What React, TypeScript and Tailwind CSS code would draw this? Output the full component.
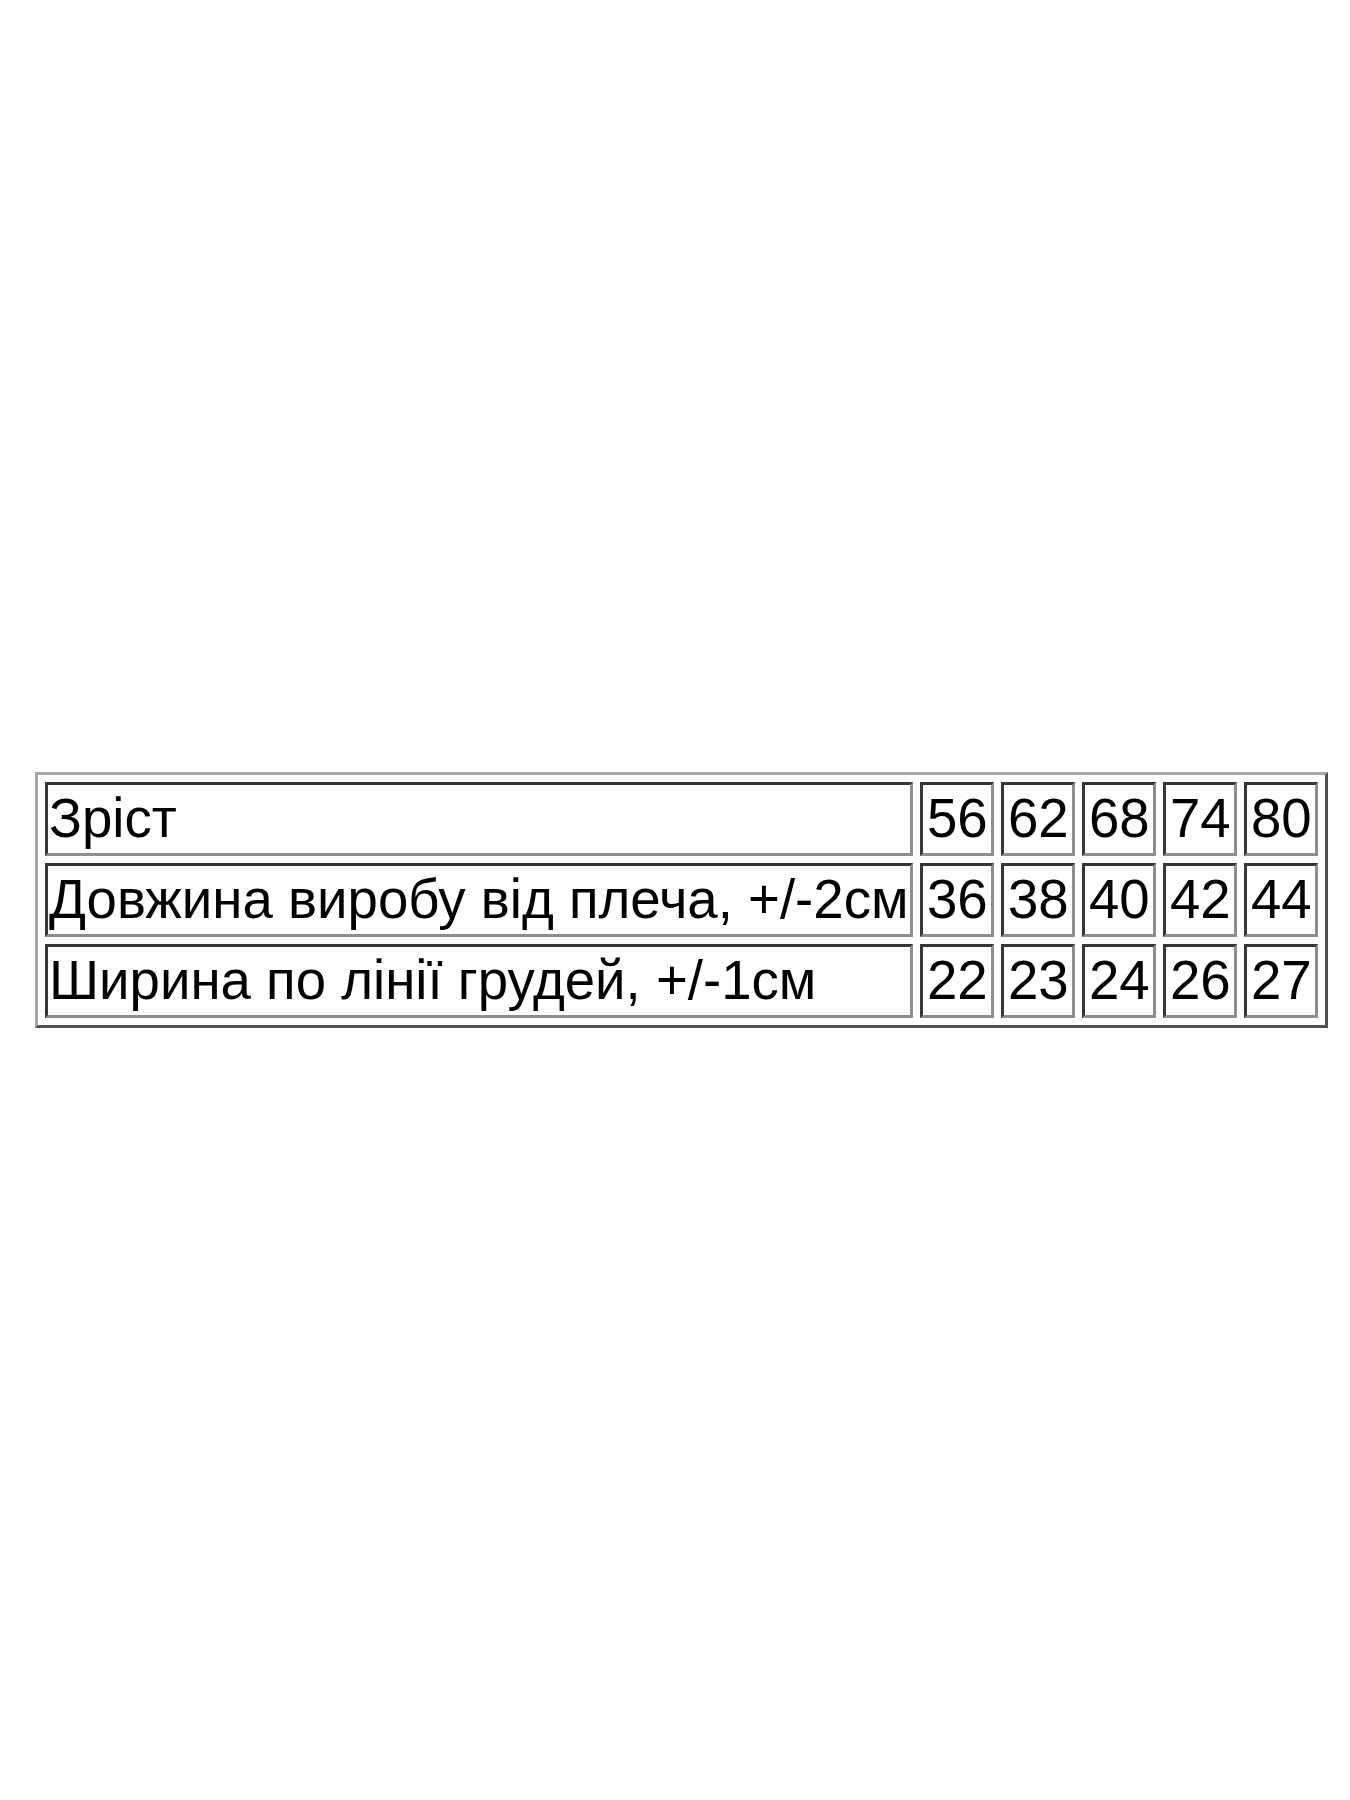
import React from 'react';

const rows: [string, string[]][] = [
  ['Зріст', ['56', '62', '68', '74', '80']],
  ['Довжина виробу від плеча, +/-2см', ['36', '38', '40', '42', '44']],
  ['Ширина по лінії грудей, +/-1см', ['22', '23', '24', '26', '27']],
];

const cell =
  'h-[74px] border-[3px] border-t-[#363636] border-l-[#363636] border-r-[#8e8e8e] border-b-[#8e8e8e] align-middle whitespace-nowrap';

const App = () => {
  return (
    <div className="flex h-[1800px] w-[1350px] items-center bg-white pl-[35px] font-['Liberation_Sans',Arial,sans-serif] text-[54.6px] leading-[62px] text-black">
      <table className="w-[1293px] table-fixed border-separate border-spacing-[7px] border-[3px] border-t-[#a8a8a8] border-l-[#a8a8a8] border-r-[#505050] border-b-[#505050]">
        <colgroup>
          <col className="w-[868px]" />
          <col className="w-[74px]" />
          <col className="w-[74px]" />
          <col className="w-[74px]" />
          <col className="w-[74px]" />
          <col className="w-[74px]" />
        </colgroup>
        <tbody>
          {rows.map(([label, values]) => (
            <tr key={label}>
              <td className={`${cell} pl-[1px] pr-[2px]`}>{label}</td>
              {values.map((v) => (
                <td key={v} className={`${cell} pl-[4px] pr-0`}>
                  {v}
                </td>
              ))}
            </tr>
          ))}
        </tbody>
      </table>
    </div>
  );
};

export default App;
